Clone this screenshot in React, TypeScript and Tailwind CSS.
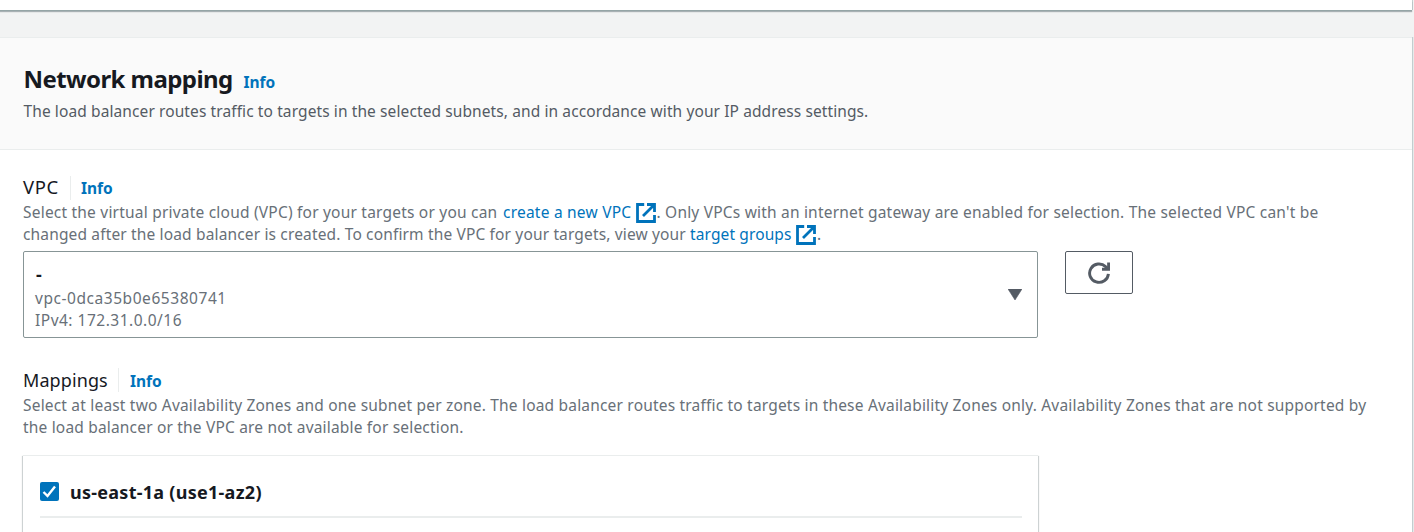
import type { ReactNode } from 'react';

function ExternalIcon() {
  return (
    <svg viewBox="0 0 20 20" className="mt-px h-5 w-5 shrink-0" fill="none" stroke="#0073bb" strokeWidth="2.8">
      <path d="M8.2 1.5H1.5V18.5H18.5V12" />
      <path d="M11 1.5H18.5V9M18 2L7 13" />
    </svg>
  );
}

function Info({ className = '' }: { className?: string }) {
  return (
    <a href="#" className={`text-[15.5px] font-bold leading-[22px] text-[#0073bb] ${className}`}>
      Info
    </a>
  );
}

function Line({ children, className = '' }: { children: ReactNode; className?: string }) {
  return <span className={`flex h-[22px] items-center whitespace-pre text-[15.5px] leading-[22px] ${className}`}>{children}</span>;
}

export default function App() {
  return (
    <div className="flex h-[532px] w-[1414px] flex-col overflow-hidden bg-[#f2f3f3] font-['Noto_Sans','Open_Sans',sans-serif] text-[#16191f]">
      <div className="mr-[2px] h-[10px] shrink-0 bg-white shadow-[0_1px_0_0_#95a5a6,0_2px_1px_0_rgba(0,28,36,0.3),1px_0_0_0_#c5cfd0]" />
      <section className="mr-[2px] mt-[27px] h-[520px] shrink-0 border-t border-[#eaeded] bg-white shadow-[1px_0_0_0_#c3cdcf,2px_0_0_0_#e6eaea]">
        <header className="h-[112px] border-b border-[#eaeded] bg-[#fafafa] pl-[23.5px] pt-[24px]">
          <div className="flex h-[38px] items-start">
            <h2 className="w-[220px] whitespace-nowrap text-[24px] font-bold leading-[33px] tracking-[-0.57px]">Network mapping</h2>
            <Info className="mt-[9px]" />
          </div>
          <Line className="tracking-[0.1px] text-[#545b64]">
            The load balancer routes traffic to targets in the selected subnets, and in accordance with your IP address settings.
          </Line>
        </header>

        <div className="pl-[23px] pt-[26px]">
          <div className="flex h-[25px] items-start">
            <h3 className="-mt-px w-[47px] whitespace-nowrap text-[18.5px] leading-[24px] tracking-[0.6px]">VPC</h3>
            <span className="h-6 w-[11px] border-l border-[#eaeded]" />
            <Info className="mt-px" />
          </div>
          <div className="text-[#687078]">
            <Line>
              <span className="w-[480px] tracking-[0.21px]">Select the virtual private cloud (VPC) for your targets or you can</span>
              <a href="#" className="w-[133px] tracking-[0.22px] text-[#0073bb]">create a new VPC</a>
              <ExternalIcon />
              <span className="pl-[0.5px] tracking-[0.2px]">. Only VPCs with an internet gateway are enabled for selection. The selected VPC can't be</span>
            </Line>
            <Line>
              <span className="w-[667px] tracking-[0.15px]">changed after the load balancer is created. To confirm the VPC for your targets, view your</span>
              <a href="#" className="w-[106px] tracking-[0.12px] text-[#0073bb]">target groups</a>
              <ExternalIcon />
              <span className="pl-px">.</span>
            </Line>
          </div>
          <div className="mt-[6px] flex items-start gap-[27px]">
            <button className="flex h-[87px] w-[1015px] items-center rounded-[2px] border border-[#879596] bg-white pl-[11px] pr-[15px] text-left text-[#687078]">
              <span className="flex flex-1 flex-col pt-[4px]">
                <span className="h-[24px] pl-px text-[18px] font-bold leading-[22px] text-[#16191f]">-</span>
                <Line className="tracking-[0.55px]">vpc-0dca35b0e65380741</Line>
                <Line className="tracking-[0.5px]">IPv4: 172.31.0.0/16</Line>
              </span>
              <svg viewBox="0 0 14 11" className="h-[11px] w-[14px]"><path d="M0 0H14L7 11Z" fill="#545b64" stroke="#545b64" strokeWidth="0.6" strokeLinejoin="round" /></svg>
            </button>
            <button className="flex h-[43px] w-[68px] items-center justify-center rounded-[2px] border border-[#545b64] bg-white">
              <svg viewBox="0 0 22 22" className="h-[22px] w-[22px]" fill="none" stroke="#545b64" strokeWidth="2.9">
                <path d="M20.4 11.8A9.4 9.2 0 1 1 17.6 4.6L20 6.6" />
                <path d="M20.6 0.5V7.2H14" />
              </svg>
            </button>
          </div>

          <div className="mt-[30px] flex h-[25px] items-start">
            <h3 className="w-[95px] whitespace-nowrap text-[18px] leading-[24px] tracking-[0.1px]">Mappings</h3>
            <span className="h-6 w-[12px] border-l border-[#eaeded]" />
            <Info className="mt-[2px]" />
          </div>
          <div className="pt-px text-[#687078]">
            <Line className="tracking-[0.188px]">
              Select at least two Availability Zones and one subnet per zone. The load balancer routes traffic to targets in these Availability Zones only. Availability Zones that are not supported by
            </Line>
            <Line className="tracking-[0.18px]">the load balancer or the VPC are not available for selection.</Line>
          </div>
          <div className="mt-[17px] h-[100px] w-[1015px] border-t border-[#eaeded] bg-white px-[17px] shadow-[0_1px_1px_0_rgba(0,28,36,0.3),1px_1px_1px_0_rgba(0,28,36,0.15),-1px_1px_1px_0_rgba(0,28,36,0.15)]">
            <div className="-mr-px flex h-[62px] items-center border-b-2 border-[#eaeded] pt-[11px]">
              <span className="flex h-[19px] w-[19px] items-center justify-center rounded-[2px] bg-[#0073bb]">
                <svg viewBox="0 0 19 19" className="h-[19px] w-[19px]"><path d="M3.5 10L7.5 14L15 4.5" fill="none" stroke="white" strokeWidth="2.4" /></svg>
              </span>
              <span className="ml-[11px] whitespace-nowrap text-[18px] font-bold leading-6 tracking-[0.27px]">us-east-1a (use1-az2)</span>
            </div>
          </div>
        </div>
      </section>
    </div>
  );
}
